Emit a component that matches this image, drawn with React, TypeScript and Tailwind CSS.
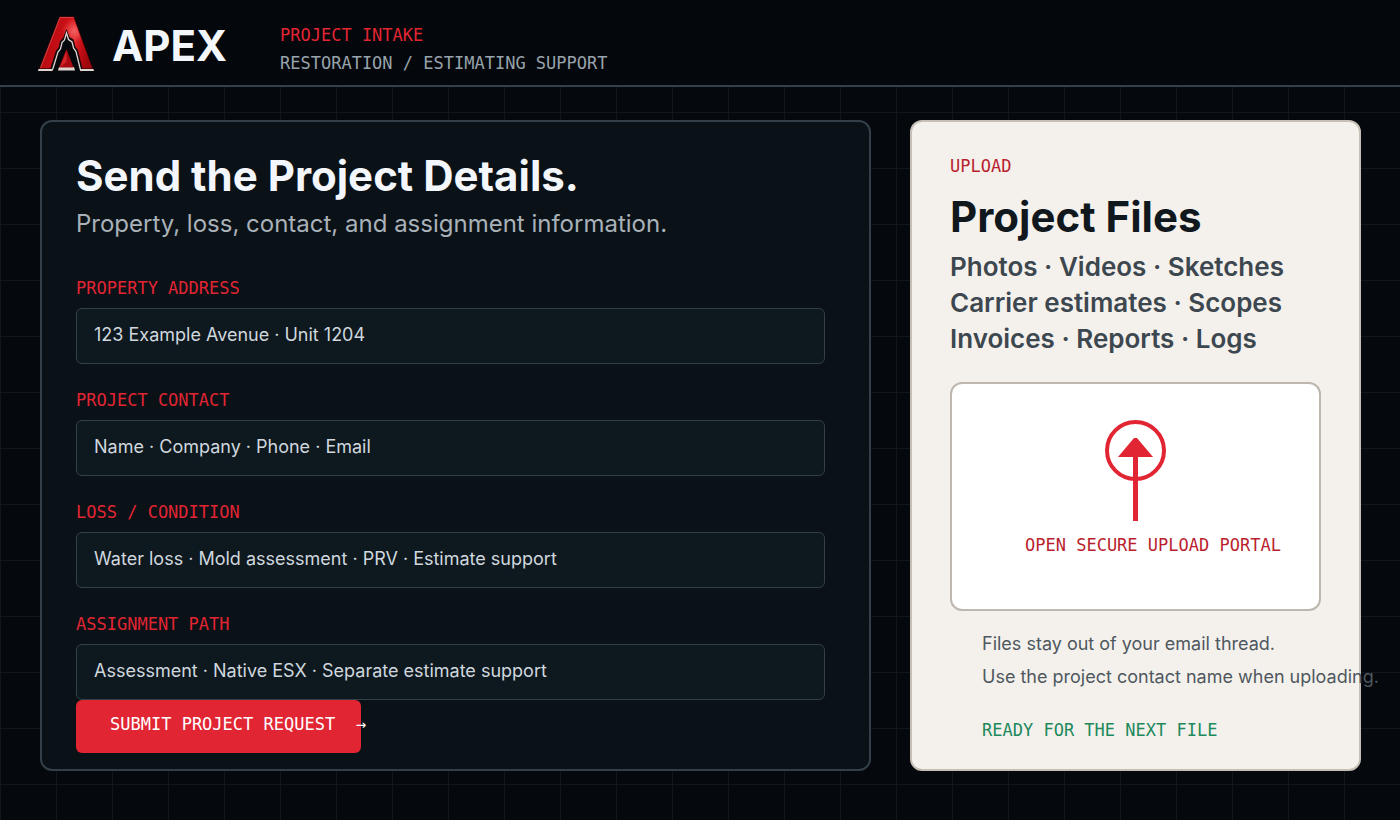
import React from 'react';

interface Field {
    id: string;
    label: string;
    value: string;
}

const FIELDS: Field[] = [
    { id: 'property-address', label: 'PROPERTY ADDRESS', value: '123 Example Avenue · Unit 1204' },
    { id: 'project-contact', label: 'PROJECT CONTACT', value: 'Name · Company · Phone · Email' },
    { id: 'loss-condition', label: 'LOSS / CONDITION', value: 'Water loss · Mold assessment · PRV · Estimate support' },
    { id: 'assignment-path', label: 'ASSIGNMENT PATH', value: 'Assessment · Native ESX · Separate estimate support' },
];

const FILE_TYPES = [
    'Photos · Videos · Sketches',
    'Carrier estimates · Scopes',
    'Invoices · Reports · Logs',
];

const ApexLogo: React.FC = () => (
    <svg viewBox="0 0 56 56" className="w-14 h-14 shrink-0" aria-hidden="true">
        <defs>
            <linearGradient id="apex-face" gradientUnits="userSpaceOnUse" x1="6" y1="36" x2="50" y2="46">
                <stop offset="0" stopColor="#b50a10" />
                <stop offset="0.35" stopColor="#cc1017" />
                <stop offset="0.6" stopColor="#e2242a" />
                <stop offset="0.8" stopColor="#c00d13" />
                <stop offset="1" stopColor="#9c070c" />
            </linearGradient>
            <radialGradient id="apex-shine" gradientUnits="userSpaceOnUse" cx="36" cy="15" r="12">
                <stop offset="0" stopColor="#ff8a86" stopOpacity="0.6" />
                <stop offset="1" stopColor="#ff8a86" stopOpacity="0" />
            </radialGradient>
        </defs>
        <path d="M21.5 0.5H36L55 53H1Z" fill="#5c0508" />
        <path d="M22 1.5H35.5L54 52H2.5Z" fill="url(#apex-face)" />
        <path d="M22 1.5H35.5L54 52H2.5Z" fill="url(#apex-shine)" />
        <path d="M2.5 52L22 1.5H35.5" fill="none" stroke="#e8524e" strokeWidth="0.8" />
        {/* notch, with the silver bevel set inside it */}
        <path
            d="M12 56V53L18 34.5L20.5 31.5L22 25L25 22L28.5 13L31.5 21L35.5 23.5L37.5 31L40 34L44.5 53V56Z"
            fill="#16080b"
        />
        <path
            d="M14.5 54L20 36L22.5 33L24 26.5L26.5 24L28.5 17L30.5 23.5L34 26L35.5 32L38 35.5L42.5 54"
            fill="#04070b"
            stroke="#ddd6d2"
            strokeWidth="1.3"
        />
        <path d="M0.5 53H15L14.5 55H0Z" fill="#ddd6d2" />
        <path d="M41.5 53H55.5L56 55H42Z" fill="#ddd6d2" />
        <path d="M14.5 56L15.5 53H41.5L42 56Z" fill="#04070b" />
        <path d="M21 51H36L37 54.5H20Z" fill="#ddd6d2" />
        <path d="M28.5 33L35.5 51.5H21Z" fill="#a80a10" />
        <path d="M28.5 35V46L22 51Z" fill="#d3262b" />
    </svg>
);

const UploadIcon: React.FC = () => (
    <svg viewBox="0 0 61 102" className="w-[61px] h-[102px] mx-auto" aria-hidden="true">
        <circle cx="30.5" cy="30.5" r="28.5" fill="none" stroke="#e12533" strokeWidth="4" />
        <path d="M29 18H32L48 37H13Z" fill="#e12533" />
        <path d="M30.5 19V101" stroke="#e12533" strokeWidth="5" />
    </svg>
);

const Header: React.FC = () => (
    <header className="flex items-center h-[87px] pt-[3px] pl-[38px] bg-[#04070b] border-b-2 border-[#334049]">
        <div className="flex items-center gap-[18px] w-[242px]">
            <ApexLogo />
            <span className="pt-1 text-[42px] leading-[48px] font-bold text-[#f3f6fa]">APEX</span>
        </div>
        <div className="pt-[10px] font-['DejaVu_Sans_Mono',monospace] text-[17px] leading-7">
            <p className="text-[#e12533]">PROJECT INTAKE</p>
            <p className="text-[#98a3ac]">RESTORATION / ESTIMATING SUPPORT</p>
        </div>
    </header>
);

const IntakeForm: React.FC = () => (
    <section className="pt-[30px] pb-4 pl-[34px] pr-11 rounded-xl border-2 border-[#334049] bg-[#0a1117]">
        <h1 className="text-[42px] leading-[48px] font-bold text-[#f3f6fa]">Send the Project Details.</h1>
        <p className="mt-2 text-2xl leading-8 text-[#a9b1b9]">
            Property, loss, contact, and assignment information.
        </p>
        <form className="mt-9" onSubmit={(e) => e.preventDefault()}>
            <div className="flex flex-col gap-6">
                {FIELDS.map((field) => (
                    <div key={field.id} className="flex flex-col gap-2">
                        <label
                            htmlFor={field.id}
                            className="font-['DejaVu_Sans_Mono',monospace] text-[17px] leading-6 text-[#e12533]"
                        >
                            {field.label}
                        </label>
                        <input
                            id={field.id}
                            type="text"
                            defaultValue={field.value}
                            className="w-full h-14 px-[17px] pb-1 rounded-md border border-[#334049] bg-[#0e191f] text-lg text-[#d0d7de]"
                        />
                    </div>
                ))}
            </div>
            <button
                type="submit"
                className="block w-[285px] h-[53px] pl-[34px] pb-1 rounded-md bg-[#e12533] text-left whitespace-pre font-['DejaVu_Sans_Mono',monospace] text-[17px] text-white"
            >
                {'SUBMIT PROJECT REQUEST  →'}
            </button>
        </form>
    </section>
);

const UploadPanel: React.FC = () => (
    <aside className="pt-8 px-[38px] pb-6 rounded-xl border-2 border-[#c5bfb5] bg-[#f4f1ec]">
        <p className="font-['DejaVu_Sans_Mono',monospace] text-[17px] leading-6 text-[#b91f2e]">UPLOAD</p>
        <h2 className="mt-[15px] text-[42px] leading-[48px] font-bold text-[#10181d]">Project Files</h2>
        <ul className="mt-2 text-[26px] leading-9 font-semibold text-[#3d474f] whitespace-nowrap">
            {FILE_TYPES.map((line) => (
                <li key={line}>{line}</li>
            ))}
        </ul>
        <a
            href="#upload"
            className="block mt-[25px] h-[229px] pt-9 rounded-xl border-2 border-[#bdb7ad] bg-white"
        >
            <UploadIcon />
            <span className="block mt-[11px] pl-[73px] font-['DejaVu_Sans_Mono',monospace] text-[17px] leading-6 whitespace-nowrap text-[#b91f2e]">
                OPEN SECURE UPLOAD PORTAL
            </span>
        </a>
        {/* the longer note runs past the panel edge on narrow columns */}
        <div className="mt-4 pl-8 whitespace-nowrap">
            <p className="text-lg leading-[33px] text-[#4f585f]">Files stay out of your email thread.</p>
            <p className="text-lg leading-[33px] text-[#4f585f]">Use the project contact name when uploading.</p>
            <p className="mt-[25px] font-['DejaVu_Sans_Mono',monospace] text-[17px] leading-6 text-[#20895c]">
                READY FOR THE NEXT FILE
            </p>
        </div>
    </aside>
);

export default function App() {
    return (
        <div className="min-h-screen bg-[#05080d] bg-[linear-gradient(to_right,#11171b_1px,transparent_1px),linear-gradient(to_bottom,#11171b_1px,transparent_1px)] bg-[size:56px_56px] font-['Inter',sans-serif]">
            <Header />
            <main className="grid grid-cols-[minmax(0,831fr)_minmax(0,451fr)] gap-[39px] pt-[33px] pb-12 pl-10 pr-[39px]">
                <IntakeForm />
                <UploadPanel />
            </main>
        </div>
    );
}
